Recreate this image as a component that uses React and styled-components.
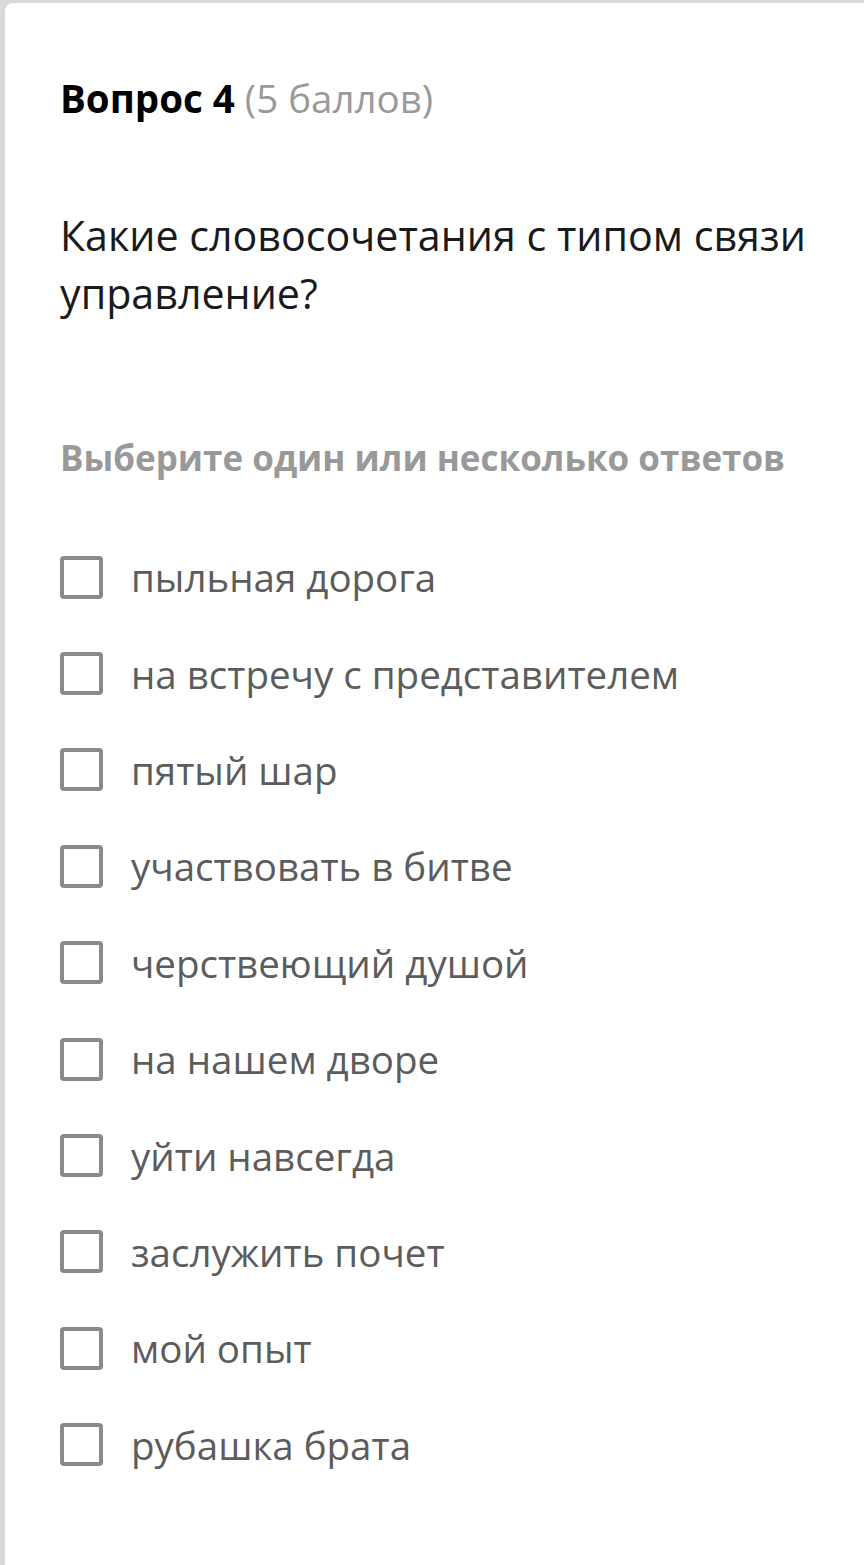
import styled, { createGlobalStyle } from 'styled-components'

const Global = createGlobalStyle`
  html, body {
    margin: 0;
    padding: 0;
    background: #d9d9d9;
  }
  body {
    font-family: "Open Sans", "Noto Sans", sans-serif;
  }
`

const Page = styled.div`
  min-height: 1565px;
  padding: 3px 0 0 5px;
  box-sizing: border-box;
  display: flex;
`

const Card = styled.div`
  flex: 1;
  background: #fff;
  border-top-left-radius: 8px;
  padding: 71px 30px 60px 55px;
  min-height: 1562px;
  box-sizing: border-box;
`

const Title = styled.h2`
  margin: 0;
  font-size: 38.5px;
  line-height: 48px;
  font-weight: 700;
  color: #000;
`

const Points = styled.span`
  font-weight: 400;
  color: #9a9a9a;
`

const Question = styled.p`
  margin: 84px 0 0;
  font-size: 41.2px;
  line-height: 58px;
  color: #1a1a1a;
`

const Hint = styled.p`
  margin: 112px 0 0;
  font-size: 35px;
  line-height: 48px;
  font-weight: 700;
  color: #999;
`

const Options = styled.ul`
  list-style: none;
  margin: 71px 0 0;
  padding: 0;
  display: flex;
  flex-direction: column;
  gap: 48px;
`

const Option = styled.li`
  display: flex;
  align-items: center;
  gap: 28px;
  height: 48.4px;
`

const Box = styled.span`
  width: 43px;
  height: 43px;
  box-sizing: border-box;
  border: 4px solid #8a8a8a;
  border-radius: 4px;
  flex-shrink: 0;
`

const Label = styled.span`
  font-size: 38.5px;
  line-height: 48px;
  color: #5c5c5c;
`

const answers = [
  'пыльная дорога',
  'на встречу с представителем',
  'пятый шар',
  'участвовать в битве',
  'черствеющий душой',
  'на нашем дворе',
  'уйти навсегда',
  'заслужить почет',
  'мой опыт',
  'рубашка брата',
]

export default function App() {
  return (
    <>
      <Global />
      <Page>
        <Card>
          <Title>
            Вопрос 4 <Points>(5 баллов)</Points>
          </Title>
          <Question>Какие словосочетания с типом связи управление?</Question>
          <Hint>Выберите один или несколько ответов</Hint>
          <Options>
            {answers.map(a => (
              <Option key={a}>
                <Box />
                <Label>{a}</Label>
              </Option>
            ))}
          </Options>
        </Card>
      </Page>
    </>
  )
}
